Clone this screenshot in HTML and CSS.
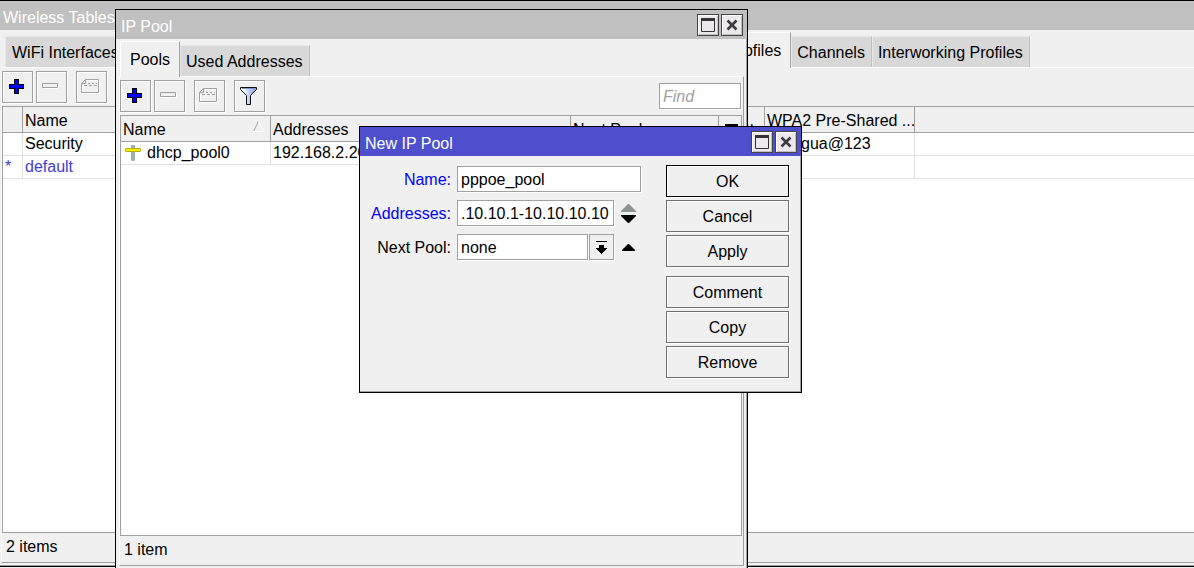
FILE: index.html
```html
<!DOCTYPE html>
<html lang="en">
<head>
<meta charset="utf-8">
<title>IP Pool</title>
<link rel="stylesheet" href="styles.css">
</head>
<body>
<svg class="sprite" aria-hidden="true">
  <symbol id="i-plus" viewBox="0 0 15 15"><path d="M5 0h5v5h5v5h-5v5H5v-5H0V5h5z" fill="#000"/><path d="M6 1h3v5h5v3H9v5H6V9H1V6h5z" fill="#00f"/></symbol>
  <symbol id="i-minus" viewBox="0 0 17 7"><path d="M1.500 1.500h15v4h-15z" fill="none" stroke="#fff"/><path d="M.5.500h15v4H.5z" fill="#f0f0f0" stroke="#a0a0a0"/></symbol>
  <symbol id="i-note" viewBox="0 0 19 15"><path d="M5.500 1.500h13v13h-17v-8" fill="none" stroke="#fff"/><path d="M4.500.500h13v13H.5v-9zM.5 4.500h4v-4M7 4.500h2m2 0h2m2 0h1M3 6.500h3m2 0h3m2 0h3" fill="none" stroke="#a0a0a0"/></symbol>
  <symbol id="i-filter" viewBox="0 0 17 18"><defs><linearGradient id="fg"><stop offset="0" stop-color="#fff"/><stop offset=".35" stop-color="#dce8fc"/><stop offset="1" stop-color="#7994dd"/></linearGradient></defs><path d="M.5.500h16v2l-6 6v9h-4v-9l-6-6z" fill="url(#fg)" stroke="#111"/><path d="M2 1.500h13" stroke="#8296c8"/></symbol>
  <symbol id="i-max" viewBox="0 0 14 14"><path d="M.5.500h13v13H.5z" fill="#ece9ec" stroke="#333"/><path d="M0 0h14v3H0z" fill="#333"/></symbol>
  <symbol id="i-close" viewBox="0 0 12 12"><path d="M1.500 1.500l9 9M10.500 1.500l-9 9" stroke="#3c3c3c" stroke-width="2.600"/></symbol>
  <symbol id="i-drop" viewBox="0 0 11 13" shape-rendering="crispEdges"><path d="M0 0h11v1H0zM3 4h5v3h3v1h-1v1H9v1H8v1H7v1H6v1H5v-1H4v-1H3v-1H2V9H1V8H0V7h3z" fill="#000"/></symbol>
  <symbol id="i-pool" viewBox="0 0 16 16"><path d="M6 0h4v15l-1 1H7l-1-1z" fill="#a0b0ac"/><path d="M1 3h14l1 1v2l-1 1H1L0 6V4z" fill="#b5ae12"/><path d="M1 4h14v2H1z" fill="#f6f000"/></symbol>
</svg>

<main class="desktop">
  <section class="window wireless">
    <header class="title"><span>Wireless Tables</span></header>
    <nav class="tabs">
      <button class="tab wifi">WiFi Interfaces</button>
      <button class="tab active">Security Profiles</button>
      <button class="tab">Channels</button>
      <button class="tab">Interworking Profiles</button>
    </nav>
    <div class="pane">
      <div class="toolbar">
        <button class="tool" aria-label="Add"><svg width="15" height="15"><use href="#i-plus"/></svg></button>
        <button class="tool" aria-label="Remove"><svg width="17" height="7"><use href="#i-minus"/></svg></button>
        <button class="tool apart" aria-label="Comment"><svg width="19" height="15"><use href="#i-note"/></svg></button>
      </div>
      <div class="list">
        <table>
          <colgroup><col class="c-flag"><col class="c-wname"><col class="c-wpa"><col></colgroup>
          <thead><tr><th></th><th><span class="split"><span>Name</span><span>...</span></span></th><th>WPA2 Pre-Shared ...</th><th class="last"></th></tr></thead>
          <tbody>
            <tr><td></td><td>Security</td><td class="key">gua@123</td><td class="last"></td></tr>
            <tr class="default"><td>*</td><td>default</td><td></td><td class="last"></td></tr>
          </tbody>
        </table>
      </div>
      <footer class="status">2 items</footer>
    </div>
  </section>

  <section class="window pool">
    <header class="title"><span>IP Pool</span>
      <button class="ctl" aria-label="Maximize"><svg width="14" height="14"><use href="#i-max"/></svg></button>
      <button class="ctl" aria-label="Close"><svg width="12" height="12"><use href="#i-close"/></svg></button>
    </header>
    <nav class="tabs">
      <button class="tab active">Pools</button>
      <button class="tab">Used Addresses</button>
    </nav>
    <div class="pane">
      <div class="toolbar">
        <button class="tool" aria-label="Add"><svg width="15" height="15"><use href="#i-plus"/></svg></button>
        <button class="tool" aria-label="Remove"><svg width="17" height="7"><use href="#i-minus"/></svg></button>
        <button class="tool apart" aria-label="Comment"><svg width="19" height="15"><use href="#i-note"/></svg></button>
        <button class="tool apart" aria-label="Filter"><svg width="17" height="18"><use href="#i-filter"/></svg></button>
        <input class="field find" type="text" placeholder="Find" aria-label="Find">
      </div>
      <div class="list">
        <table>
          <colgroup><col class="c-name"><col><col class="c-next"><col class="c-menu"></colgroup>
          <thead><tr>
            <th><span class="split"><span>Name</span><svg width="11" height="12" viewBox="0 0 11 12"><path d="M.5 11.500L5.500 1" fill="none" stroke="#a0a0a0"/><path d="M5.500 1l5 10.500H0" fill="none" stroke="#fff"/></svg></span></th>
            <th>Addresses</th><th>Next Pool</th>
            <th class="last menu"><svg width="13" height="10"><path d="M0 0h13v2H0zM2 3h9L6.500 7z"/></svg></th>
          </tr></thead>
          <tbody><tr><td><span class="entry"><svg width="16" height="16"><use href="#i-pool"/></svg>dhcp_pool0</span></td><td>192.168.2.20</td><td></td><td class="last"></td></tr></tbody>
        </table>
      </div>
      <footer class="status">1 item</footer>
    </div>
  </section>

  <section class="window dialog" role="dialog" aria-label="New IP Pool">
    <header class="title"><span>New IP Pool</span>
      <button class="ctl" aria-label="Maximize"><svg width="14" height="14"><use href="#i-max"/></svg></button>
      <button class="ctl" aria-label="Close"><svg width="12" height="12"><use href="#i-close"/></svg></button>
    </header>
    <form class="body">
      <div class="fields">
        <label class="changed" for="name">Name:</label>
        <input class="field" id="name" type="text" value="pppoe_pool">
        <label class="changed" for="addr">Addresses:</label>
        <div class="control">
          <input class="field" id="addr" type="text" value=".10.10.1-10.10.10.10">
          <button class="arrow" type="button" aria-label="Add or remove address"><svg width="15" height="19"><path d="M7 0h1l7 7v1H0V7z" fill="#8d948d"/><path d="M0 11h15v1l-7 7H7l-7-7z"/></svg></button>
        </div>
        <label for="next">Next Pool:</label>
        <div class="control">
          <select class="field" id="next"><option>none</option></select>
          <button class="drop" type="button" aria-label="Open list"><svg width="11" height="13"><use href="#i-drop"/></svg></button>
          <button class="arrow" type="button" aria-label="Clear"><svg width="13" height="7"><path d="M6 0h1l6 6v1H0V6z"/></svg></button>
        </div>
      </div>
      <div class="actions">
        <button class="primary" type="button">OK</button>
        <button type="button">Cancel</button>
        <button type="button">Apply</button>
        <button class="group" type="button">Comment</button>
        <button type="button">Copy</button>
        <button type="button">Remove</button>
      </div>
    </form>
  </section>
</main>
</body>
</html>
```

FILE: styles.css
```css
* { box-sizing: border-box; }
body { margin: 0; background: #f0f0f0; color: #000; }
body, button, input, select { font: 16px/20px "Liberation Sans", Arial, sans-serif; }
button { margin: 0; padding: 0; color: inherit; background: #f0f0f0; border: 0; }
svg { display: block; flex: none; }
.sprite { position: absolute; width: 0; height: 0; }
.desktop { position: relative; height: 100vh; overflow: hidden; }

/* windows */
.window {
  position: absolute;
  isolation: isolate;
  display: flex;
  flex-direction: column;
  background: #f0f0f0;
  border: 1px solid #000;
  box-shadow: inset -1px -1px #a0a0a0;
}
.wireless { top: 0; bottom: 1px; left: -3px; right: -8px; }
.pool { top: 9px; bottom: -2px; left: 115px; width: 633px; }
.dialog { top: 126px; left: 359px; width: 443px; }

.title {
  display: flex;
  align-items: center;
  gap: 2px;
  height: 29px;
  flex: none;
  padding: 0 4px 0 5px;
  background: #c0c0c0;
  color: #fff;
}
.title span { flex: 1; padding-top: 5px; }
.dialog .title { background: #4d4fcc; }
.ctl {
  display: grid;
  place-items: center;
  width: 22px;
  height: 22px;
  background: #ece9ec;
  border: 1px solid #444;
  box-shadow: inset 1px 1px #fff, inset -1px -1px #c0c0c0;
}

/* tabs */
.tabs {
  display: flex;
  align-items: flex-end;
  height: 37px;
  flex: none;
  padding-left: 7px;
}
.tab {
  height: 31px;
  flex: none;
  padding: 1px 6px 0 5px;
  background: #d8d8d8;
  border-top: 1px solid #e8e8e8;
  border-right: 1px solid #c0c0c0;
  border-left: 1px solid #e8e8e8;
}
.tab.wifi { margin-right: 533px; padding-left: 6px; }
.tab.active {
  position: relative;
  z-index: 1;
  height: 36px;
  margin: 0 0 -1px -3px;
  padding: 0 9px;
  background: #f0f0f0;
  border-top-color: #fff;
  border-left-color: #fff;
  border-right-color: #a0a0a0;
}
.pane {
  display: flex;
  flex: 1;
  flex-direction: column;
  min-height: 0;
  margin: 0 3px;
  margin-bottom: 3px;
  padding-right: 1px;
  border: 1px solid #fff;
  border-right-color: #a0a0a0;
  border-bottom-color: #a0a0a0;
}

/* toolbar */
.toolbar { display: flex; gap: 3px; height: 38px; flex: none; padding-top: 3px; }
.tool {
  display: grid;
  place-items: center;
  width: 31px;
  height: 32px;
  padding: 0 2px 1px 0;
  border: 1px solid #a0a0a0;
  box-shadow: inset 1px 1px #fff, 1px 1px #fff;
}
.tool.apart { margin-left: 6px; }
.field {
  width: 100%;
  min-width: 0;
  height: 26px;
  margin: 0;
  padding: 1px 3px 0;
  color: #000;
  background: #fff;
  border: 1px solid #a0a0a0;
  border-radius: 0;
  box-shadow: 1px 1px #fff;
  outline: 0;
  appearance: none;
}
.find { width: 82px; margin: 3px 1px 0 auto; }
.find::placeholder { color: #a0a0a0; font-style: italic; opacity: 1; }

/* lists */
.list {
  flex: 1;
  min-height: 0;
  overflow: hidden;
  background: #fff;
  border: 1px solid #a0a0a0;
}
table { width: 100%; table-layout: fixed; border-collapse: separate; border-spacing: 0; }
th, td {
  padding: 0 0 0 2px;
  overflow: hidden;
  white-space: nowrap;
  text-align: left;
  font-weight: 400;
}
th {
  height: 26px;
  padding-top: 3px;
  background: #f0f0f0;
  border-right: 1px solid #a0a0a0;
  border-bottom: 1px solid #a0a0a0;
}
td { height: 23px; border-right: 1px solid #e0e0e0; border-bottom: 1px solid #e0e0e0; }
th.last, td.last { border-right: 0; }
.c-flag { width: 20px; }
.c-wname { width: 742px; }
.c-wpa { width: 150px; }
.c-name { width: 150px; }
.c-next { width: 148px; }
.c-menu { width: 22px; }
.split { display: flex; justify-content: space-between; padding-right: 10px; }
.split svg { margin-right: -4px; }
.menu { padding-top: 0; }
.menu svg { margin: 0 auto; }
.entry { display: flex; align-items: center; gap: 6px; padding-left: 2px; }
.key { padding-left: 36px; }
.default { color: #4040d0; }
.status { height: 29px; flex: none; padding: 4px 4px 0; }

/* dialog */
.body { display: flex; align-items: flex-start; padding: 9px 12px 14px 0; }
.fields {
  display: grid;
  flex: 1;
  grid-template-columns: 91px 184px;
  gap: 8px 6px;
  align-items: center;
  padding-top: 1px;
}
.fields label { text-align: right; padding-top: 1px; }
.fields .changed { color: #0000f8; }
.control { display: flex; align-items: center; gap: 1px; }
.control .field { flex: 1; }
.drop {
  display: grid;
  place-items: center;
  width: 25px;
  height: 26px;
  border: 1px solid #a0a0a0;
  box-shadow: 1px 1px #fff;
}
.arrow { display: grid; place-items: center; width: 15px; margin: 0 5px 0 6px; }
.actions { display: flex; flex-direction: column; gap: 3px; width: 123px; }
.actions button {
  height: 32px;
  padding-top: 2px;
  border: 1px solid #707070;
  box-shadow: inset 1px 1px #fff, 1px 1px #fff;
}
.actions .group { margin-top: 6px; }
.actions .primary { border-color: #000; }
```
